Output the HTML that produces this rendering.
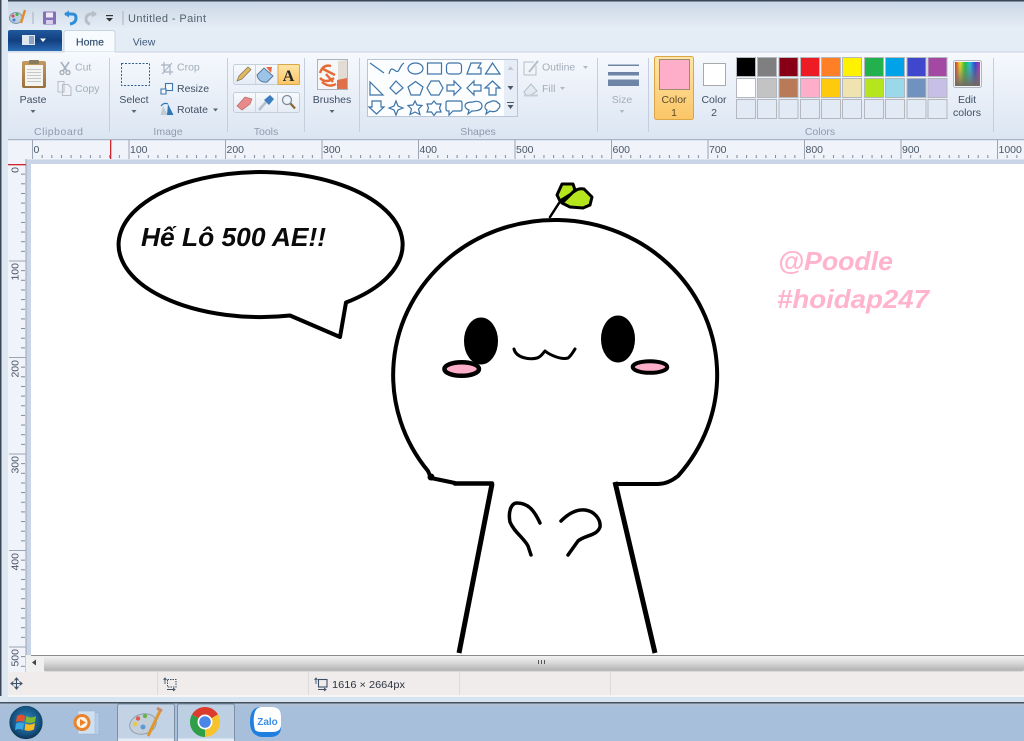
<!DOCTYPE html>
<html><head><meta charset="utf-8"><title>Untitled - Paint</title>
<style>
html,body{margin:0;padding:0;background:#fff;width:1024px;height:741px;overflow:hidden}
svg{display:block;font-family:"Liberation Sans","Noto Sans CJK SC",sans-serif}
.l{font-size:10.5px;fill:#3f4f63}
.d{font-size:10.5px;fill:#a3adb9}
.g{font-size:10.5px;fill:#8f9cad}
.m{text-anchor:middle}
.r{font-size:10.5px;fill:#4a5666}
.sh path,.sh rect,.sh ellipse,.sh line{fill:none;stroke:#3c74a8;stroke-width:1.2}
</style></head><body>
<svg width="1024" height="741" viewBox="0 0 1024 741" xmlns="http://www.w3.org/2000/svg">
<defs>
<linearGradient id="tb" x1="0" y1="0" x2="0" y2="1"><stop offset="0" stop-color="#c9d6e4"/><stop offset="1" stop-color="#e6eef7"/></linearGradient>
<linearGradient id="rb" x1="0" y1="0" x2="0" y2="1"><stop offset="0" stop-color="#f6f9fd"/><stop offset=".6" stop-color="#e6edf7"/><stop offset="1" stop-color="#dbe5f2"/></linearGradient>
<linearGradient id="app" x1="0" y1="0" x2="0" y2="1"><stop offset="0" stop-color="#1f5a9e"/><stop offset=".5" stop-color="#123f80"/><stop offset="1" stop-color="#2a6cb4"/></linearGradient>
<linearGradient id="or" x1="0" y1="0" x2="0" y2="1"><stop offset="0" stop-color="#fde6a6"/><stop offset="1" stop-color="#fbc566"/></linearGradient>
<linearGradient id="sb" x1="0" y1="0" x2="0" y2="1"><stop offset="0" stop-color="#f2f2f2"/><stop offset=".45" stop-color="#d8d8d8"/><stop offset=".9" stop-color="#b4b4b4"/><stop offset="1" stop-color="#c4c4c4"/></linearGradient>
<linearGradient id="rain" x1="0" y1="0" x2="1" y2="0"><stop offset="0" stop-color="#e0232b"/><stop offset=".2" stop-color="#f0e020"/><stop offset=".4" stop-color="#20c040"/><stop offset=".6" stop-color="#20c0e0"/><stop offset=".8" stop-color="#3040d0"/><stop offset="1" stop-color="#c030b0"/></linearGradient>
<linearGradient id="fade" x1="0" y1="0" x2="0" y2="1"><stop offset="0" stop-color="#808080" stop-opacity="0"/><stop offset="1" stop-color="#706a60"/></linearGradient>
<linearGradient id="btn" x1="0" y1="0" x2="0" y2="1"><stop offset="0" stop-color="#f8fafd"/><stop offset="1" stop-color="#e4ebf5"/></linearGradient>
<radialGradient id="orb" cx=".5" cy=".45" r=".55"><stop offset="0" stop-color="#2f8ec4"/><stop offset=".75" stop-color="#15507f"/><stop offset="1" stop-color="#0c2f4f"/></radialGradient>
<linearGradient id="clip" x1="0" y1="0" x2="0" y2="1"><stop offset="0" stop-color="#c39a62"/><stop offset="1" stop-color="#9a6f3e"/></linearGradient>
<pattern id="tx" x="32" y="155" width="9.65" height="4" patternUnits="userSpaceOnUse"><rect width="1" height="3" fill="#7e8a9a"/></pattern>
<pattern id="ty" x="21" y="164" width="5" height="9.65" patternUnits="userSpaceOnUse"><rect width="4" height="1" fill="#7e8a9a"/></pattern>
<pattern id="mx" x="32" y="140" width="96.5" height="20" patternUnits="userSpaceOnUse"><rect width="1" height="20" fill="#9aa6b6"/></pattern>
</defs>

<g style="filter:blur(.35px)">
<!-- frame -->
<rect width="1024" height="30" fill="url(#tb)"/>
<rect width="1024" height="1.5" fill="#3a4656"/>
<rect y="30" width="1024" height="22" fill="#e4ecf6"/>
<rect y="0" width="8" height="703" fill="#dde7f2"/>
<rect y="0" width="1.5" height="703" fill="#3a4656"/>

<!-- QAT -->
<ellipse cx="16" cy="18" rx="6.5" ry="5.5" fill="#b8cfe0" stroke="#7f98ae"/>
<circle cx="13" cy="16" r="1.5" fill="#e04848"/><circle cx="17" cy="14.5" r="1.5" fill="#48b048"/><circle cx="14" cy="20" r="1.5" fill="#4878d0"/>
<path d="M25 10 L21 23" stroke="#e08a2a" stroke-width="2.4"/>
<rect x="32.5" y="12" width="1" height="12" fill="#a5b1c0"/>
<rect x="43" y="11.5" width="13" height="13" rx="1" fill="#8470b8"/><rect x="46" y="12.5" width="7" height="5" fill="#efeaf6"/><rect x="46" y="20" width="7" height="4" fill="#d7d0e8"/>
<path d="M65 14 H72 Q76 14 76 18 Q76 23 70 24" fill="none" stroke="#2f8ed8" stroke-width="3"/><path d="M64 14 L69 10.5 V17.5 Z" fill="#2f8ed8"/>
<path d="M96 14 H90 Q86 15 86 19 Q86 23 90 24" fill="none" stroke="#b6bfc8" stroke-width="3"/><path d="M97 14 L92 10.5 V17.5 Z" fill="#b6bfc8"/>
<rect x="106" y="15" width="7" height="1.2" fill="#333"/><path d="M106 18 H113 L109.5 21.5 Z" fill="#333"/>
<rect x="122.5" y="11" width="1" height="14" fill="#a5b1c0"/>
<text x="128" y="22" font-size="11" fill="#55606e" textLength="78" lengthAdjust="spacing">Untitled - Paint</text>

<!-- tabs -->
<path d="M8 51 V32 Q8 30 10 30 H60 Q62 30 62 32 V51 Z" fill="url(#app)"/>
<rect x="22" y="35" width="13" height="10" fill="#dfe8f2"/><rect x="29" y="36" width="5" height="8" fill="#8ba4c2"/>
<path d="M40 38.5 H46 L43 42 Z" fill="#fff"/>
<path d="M64 52 V33 Q64 30.500 67 30.500 H112 Q115 30.500 115 33 V52 Z" fill="#f8fbfe" stroke="#c8d4e2"/>
<text x="90" y="45.500" font-size="10.500" fill="#33506f" text-anchor="middle" stroke="#33506f" stroke-width=".2">Home</text>
<text x="144" y="45.500" font-size="10.500" fill="#3e5a7a" text-anchor="middle">View</text>

<!-- ribbon -->
<rect x="8" y="52" width="1016" height="87" fill="url(#rb)"/>
<rect x="8" y="51.500" width="56" height="1" fill="#c8d4e2"/><rect x="115" y="51.500" width="909" height="1" fill="#c8d4e2"/>
<rect x="8" y="139" width="1016" height="1.500" fill="#a9b5c4"/>
<g fill="#c3cfdd">
<rect x="109" y="58" width="1" height="74"/><rect x="227" y="58" width="1" height="74"/><rect x="304" y="58" width="1" height="74"/><rect x="359" y="58" width="1" height="74"/><rect x="597" y="58" width="1" height="74"/><rect x="648" y="58" width="1" height="74"/><rect x="993" y="58" width="1" height="74"/>
</g>

<!-- clipboard -->
<rect x="22" y="61" width="24" height="27" rx="2" fill="url(#clip)"/>
<rect x="25" y="65" width="18" height="21" fill="#f4f4f0"/>
<g fill="#c4c8cc"><rect x="27" y="69" width="14" height="1"/><rect x="27" y="72" width="14" height="1"/><rect x="27" y="75" width="14" height="1"/><rect x="27" y="78" width="14" height="1"/><rect x="27" y="81" width="14" height="1"/></g>
<rect x="29" y="60" width="10" height="4" rx="1" fill="#8a7a5c"/>
<text x="33" y="103" class="l m">Paste</text><path d="M30.500 110 H35.500 L33 113 Z" fill="#556477"/>
<path d="M61 62 L67 71 M69 62 L63 71" stroke="#a6b0bc" stroke-width="1.600" fill="none"/><circle cx="62" cy="72.500" r="2" fill="none" stroke="#a6b0bc" stroke-width="1.400"/><circle cx="68" cy="72.500" r="2" fill="none" stroke="#a6b0bc" stroke-width="1.400"/>
<text x="75" y="70.500" class="d">Cut</text>
<path d="M58 81.500 H64 V92 H58 Z M62.500 84.500 H68 L71 87.500 V95.500 H62.500 Z" fill="#eef2f7" stroke="#b5bec9"/>
<text x="75" y="92" class="d">Copy</text>
<text x="34" y="135" class="g" textLength="49" lengthAdjust="spacing">Clipboard</text>

<!-- image -->
<rect x="121.500" y="63.500" width="28" height="22" fill="none" stroke="#2f5f90" stroke-dasharray="2 1.500"/>
<text x="134" y="103" class="l m">Select</text><path d="M131.500 110 H136.500 L134 113 Z" fill="#556477"/>
<path d="M164 62 V72 H173 M161 65 H170 V75" fill="none" stroke="#a9b4c1" stroke-width="1.200"/><path d="M162 74 L172 63" stroke="#a9b4c1"/>
<text x="177" y="70.500" class="d">Crop</text>
<rect x="165.500" y="83.500" width="7" height="7" fill="#f6f9fc" stroke="#3b76ad" stroke-width="1.100"/><path d="M161 94 V89 H166 V94 Z" fill="#f6f9fc" stroke="#3b76ad" stroke-width="1.100"/>
<text x="177" y="92" class="l">Resize</text>
<path d="M160.500 115 L163 106 L168 115 Z" fill="#c2cad3"/><path d="M168 104 L173.500 115 H167 Z" fill="#2e78b8"/><path d="M161 106 Q164 102 168 104" fill="none" stroke="#2e78b8" stroke-width="1.200"/>
<text x="177" y="113" class="l">Rotate</text><path d="M213 108.500 H218 L215.500 111.500 Z" fill="#556477"/>
<text x="168" y="135" class="g m">Image</text>

<!-- tools -->
<rect x="233.500" y="64.500" width="66" height="20" rx="2" fill="url(#btn)" stroke="#c4cfdc"/>
<rect x="233.500" y="92.500" width="66" height="20" rx="2" fill="url(#btn)" stroke="#c4cfdc"/>
<rect x="278" y="64.500" width="21.500" height="20" rx="1" fill="url(#or)" stroke="#dba548"/>
<rect x="255" y="65" width="1" height="19" fill="#ccd6e2"/><rect x="277" y="93" width="1" height="19" fill="#ccd6e2"/><rect x="255" y="93" width="1" height="19" fill="#ccd6e2"/>
<path d="M237 81 L239 76 L248 67 L251 69.500 L242 79 Z" fill="#e2b860" stroke="#7e7052" stroke-width=".7"/>
<path d="M257 75 L264 68 L273 76 L267 82 Q261 83 258 78 Z" fill="#9cc4e6" stroke="#5a7a9a"/><path d="M266 67 L272 67 L271 73 Z" fill="#e86a44"/>
<text x="288.500" y="81" font-family="Liberation Serif" font-weight="bold" font-size="16" text-anchor="middle" fill="#252525">A</text>
<path d="M237 106 L245 97 L252 99 L250 104 L242 110 Z" fill="#e88a8a" stroke="#b96a6a" stroke-width=".7"/>
<path d="M259 110 L266 102" stroke="#b4c0cc" stroke-width="2.500"/><path d="M264 100 L270 95 L274 99 L269 105 Z" fill="#3c7ec0"/>
<circle cx="287" cy="100" r="4.500" fill="#eef4fa" stroke="#7f8c9c" stroke-width="1.300"/><path d="M290.500 103.500 L295 108.500" stroke="#8b6a3a" stroke-width="2.400"/>
<text x="266" y="135" class="g m">Tools</text>

<!-- brushes -->
<rect x="317.500" y="59.500" width="30" height="30" fill="#f5f7f9" stroke="#aab4c0"/>
<path d="M338 61 L347 60 V80 L338 82 Z" fill="#e2dcd4"/><path d="M337 80 L347 78 V89 H337 Z" fill="#e0704a"/>
<path d="M320 73 Q323 64 331 66 M320 78 Q326 84 334 78 M322 82 Q329 88 336 84 M323 69 L335 75 M326 74 L333 82" fill="none" stroke="#e56a34" stroke-width="2.400"/>
<text x="332" y="103" class="l m">Brushes</text><path d="M329.500 110 H334.500 L332 113 Z" fill="#556477"/>

<!-- shapes -->
<rect x="367.500" y="59.500" width="150" height="57" fill="#fbfdff" stroke="#b7c5d6"/>
<rect x="504" y="60" width="13" height="56" fill="#e6edf6"/>
<path d="M507.500 70 H513.500 L510.500 66 Z" fill="#c0c8d2"/><path d="M507.500 86 H513.500 L510.500 90 Z" fill="#4a5666"/>
<rect x="507" y="102" width="7" height="1" fill="#4a5666"/><path d="M507.500 105 H513.500 L510.500 109 Z" fill="#4a5666"/>
<g class="sh">
<line x1="370" y1="63" x2="384" y2="73"/>
<path d="M389 74 C392 62 396 76 399 70 C401 66 402 64 404 63"/>
<ellipse cx="415.500" cy="68.500" rx="7.500" ry="5.500"/>
<rect x="427.500" y="63" width="14" height="11"/>
<rect x="446.500" y="63" width="15" height="11" rx="3"/>
<path d="M467 74 L471 63 H481 L478 68 H481 V74 Z"/>
<path d="M485.500 74 L492.500 63 L500 74 Z"/>
<path d="M370 82 V95 H383 Z"/>
<path d="M396 81 L403 88 L396 94 L390 88 Z"/>
<path d="M415.500 81.500 L423 87 L420 95 H411 L408 87 Z"/>
<path d="M430 81 H438 L442 88 L438 95 H430 L426 88 Z" transform="translate(1 0) scale(1)"/>
<path d="M447 85 H454 V81 L461 88 L454 95 V91 H447 Z"/>
<path d="M467 88 L474 81 V85 H481 V91 H474 V95 Z"/>
<path d="M492.500 81 L500 88 H496 V95 H489 V88 H485 Z"/>
<path d="M372 101 H381 V107 H384 L376.500 114 L369 107 H372 Z"/>
<path d="M396 101 L398 106 L403 108 L398 110 L396 115 L394 110 L389 108 L394 106 Z"/>
<path d="M415 101 L417 105 L422 105.500 L418.500 109 L420 114.500 L415 112 L410 114.500 L411.500 109 L408 105.500 L413 105 Z"/>
<path d="M434 101 L436.500 104 L441 104 L439.500 108 L441 112 L436.500 112 L434 115.500 L431.500 112 L427 112 L428.500 108 L427 104 L431.500 104 Z"/>
<path d="M448 101 H460 Q462 101 462 103 V109 Q462 111 460 111 H453 L449 115 V111 H448 Q446 111 446 109 V103 Q446 101 448 101 Z"/>
<path d="M473 102 C479 100 482 103 482 106 C482 110 478 111 472 111 L468 114 L469 110 C466 109 465 107 465 106 C465 103 469 102 473 102 Z"/>
<path d="M490 102 C493 100 497 101 498 103 C501 104 500 108 498 109 C497 112 492 112 490 111 L486 114 L487 110 C484 109 484 103 490 102 Z"/>
</g>
<path d="M524 75 V62 H534 M524 75 H536 V66" fill="none" stroke="#b4bec9"/><path d="M529 72 L538 61" stroke="#b4bec9" stroke-width="2"/>
<text x="542" y="70.500" class="d">Outline</text><path d="M583 66 H588 L585.500 69 Z" fill="#b0b9c4"/>
<path d="M524 92 L531 84 L537 91 L531 95 H526 Z" fill="#e4eaf2" stroke="#b4bec9"/><rect x="524" y="94.500" width="14" height="2" fill="#c4cdd8"/>
<text x="542" y="92" class="d">Fill</text><path d="M560 87 H565 L562.500 90 Z" fill="#b0b9c4"/>
<text x="478" y="135" class="g m">Shapes</text>

<!-- size -->
<rect x="608" y="64.500" width="31" height="1.500" fill="#6e85a8"/>
<rect x="608" y="72" width="31" height="3.500" fill="#6e85a8"/>
<rect x="608" y="79.500" width="31" height="6.500" fill="#6e85a8"/>
<text x="622" y="103" class="d m">Size</text><path d="M619.500 110 H624.500 L622 113 Z" fill="#b0b9c4"/>

<!-- color 1 / 2 -->
<rect x="654.500" y="56.500" width="39" height="63" rx="2" fill="url(#or)" stroke="#dba548"/>
<rect x="659.500" y="59.500" width="30" height="30" fill="#ffaec9" stroke="#a08a70"/>
<text x="674" y="103" class="m" font-size="10.500" fill="#5a4a2c">Color</text><text x="674" y="116" class="m" font-size="10.500" fill="#5a4a2c">1</text>
<rect x="703.500" y="63.500" width="22" height="22" fill="#fff" stroke="#a9a9a9"/>
<text x="714" y="103" class="l m">Color</text><text x="714" y="116" class="l m">2</text>

<!-- palette -->
<g stroke="#b4b8be" stroke-width="1">
<rect x="736.500" y="57.500" width="19" height="19" fill="#000"/><rect x="757.500" y="57.500" width="19" height="19" fill="#7f7f7f"/><rect x="779" y="57.500" width="19" height="19" fill="#880015"/><rect x="800.500" y="57.500" width="19" height="19" fill="#ed1c24"/><rect x="821.500" y="57.500" width="19" height="19" fill="#ff7f27"/><rect x="842.500" y="57.500" width="19" height="19" fill="#fff200"/><rect x="864.500" y="57.500" width="19" height="19" fill="#22b14c"/><rect x="885.500" y="57.500" width="19" height="19" fill="#00a2e8"/><rect x="907" y="57.500" width="19" height="19" fill="#3f48cc"/><rect x="928" y="57.500" width="19" height="19" fill="#a349a4"/>
<rect x="736.500" y="78.500" width="19" height="19" fill="#fff"/><rect x="757.500" y="78.500" width="19" height="19" fill="#c3c3c3"/><rect x="779" y="78.500" width="19" height="19" fill="#b97a57"/><rect x="800.500" y="78.500" width="19" height="19" fill="#ffaec9"/><rect x="821.500" y="78.500" width="19" height="19" fill="#ffc90e"/><rect x="842.500" y="78.500" width="19" height="19" fill="#efe4b0"/><rect x="864.500" y="78.500" width="19" height="19" fill="#b5e61d"/><rect x="885.500" y="78.500" width="19" height="19" fill="#99d9ea"/><rect x="907" y="78.500" width="19" height="19" fill="#7092be"/><rect x="928" y="78.500" width="19" height="19" fill="#c8bfe7"/>
<g fill="#e2eaf5">
<rect x="736.500" y="99.500" width="19" height="19"/><rect x="757.500" y="99.500" width="19" height="19"/><rect x="779" y="99.500" width="19" height="19"/><rect x="800.500" y="99.500" width="19" height="19"/><rect x="821.500" y="99.500" width="19" height="19"/><rect x="842.500" y="99.500" width="19" height="19"/><rect x="864.500" y="99.500" width="19" height="19"/><rect x="885.500" y="99.500" width="19" height="19"/><rect x="907" y="99.500" width="19" height="19"/><rect x="928" y="99.500" width="19" height="19"/>
</g></g>
<rect x="953.500" y="60.500" width="28" height="27" rx="2" fill="#f3f5f8" stroke="#aeb6c0"/>
<rect x="955" y="62" width="25" height="24" fill="url(#rain)"/><rect x="955" y="62" width="25" height="24" fill="url(#fade)"/>
<text x="967" y="103" class="l m">Edit</text><text x="967" y="116" class="l m">colors</text>
<text x="820" y="135" class="g m">Colors</text>

<!-- canvas backdrop -->
<rect x="8" y="140" width="1016" height="532" fill="#c9d4e6"/>
<!-- h ruler -->
<rect x="8" y="140.500" width="1016" height="19" fill="#f0f3fa"/>
<rect x="32" y="155" width="992" height="3.500" fill="url(#tx)"/>
<rect x="32" y="140" width="992" height="19" fill="url(#mx)"/>
<g class="r">
<text x="33.500" y="153">0</text><text x="130" y="153">100</text><text x="226.500" y="153">200</text><text x="323" y="153">300</text><text x="419.500" y="153">400</text><text x="516" y="153">500</text><text x="612.500" y="153">600</text><text x="709" y="153">700</text><text x="805.500" y="153">800</text><text x="902" y="153">900</text><text x="998.500" y="153">1000</text>
</g>
<rect x="110" y="140" width="1.300" height="19" fill="#d0242c"/>
<!-- v ruler -->
<rect x="8" y="159" width="18" height="513" fill="#f0f3fa"/>
<rect x="25.500" y="159" width="1" height="513" fill="#9aa6b6"/>
<rect x="21" y="164" width="4.500" height="508" fill="url(#ty)"/>
<g fill="#9aa6b6"><rect x="9" y="260.500" width="17" height="1"/><rect x="9" y="357" width="17" height="1"/><rect x="9" y="453.500" width="17" height="1"/><rect x="9" y="550" width="17" height="1"/><rect x="9" y="646.500" width="17" height="1"/></g>
<rect x="8" y="164" width="18" height="1.300" fill="#d0242c"/>
<g class="r" text-anchor="end">
<text transform="translate(18.500 167) rotate(-90)">0</text>
<text transform="translate(18.500 263) rotate(-90)">100</text>
<text transform="translate(18.500 360) rotate(-90)">200</text>
<text transform="translate(18.500 456) rotate(-90)">300</text>
<text transform="translate(18.500 553) rotate(-90)">400</text>
<text transform="translate(18.500 649) rotate(-90)">500</text>
</g>
</g>

<!-- canvas -->
<rect x="31" y="164" width="993" height="491" fill="#fff"/>
<g fill="none" stroke="#000" stroke-linejoin="round" stroke-linecap="round">
<path d="M346 302.500 A142 72.500 0 1 0 290 315.500 L340 337 Z" stroke-width="4"/>
<path d="M455 483 L431 478 L428 471 A162 155 0 1 1 678 476 Q668 484 658 484 H615" stroke-width="4"/>
<path d="M455 483.500 H492" stroke-width="4.500"/>
<path d="M492 484 L459 653" stroke-width="5" stroke-linecap="butt"/>
<path d="M615 482 L655 653" stroke-width="5" stroke-linecap="butt"/>
<circle cx="431" cy="477" r="3.500" fill="#000" stroke="none"/>
<path d="M540 523 C534 510 528 503 517 503 C511 503 508 512 510 522 C514 532 524 538 528 546 L531 555" stroke-width="3.500"/>
<path d="M561 521 C567 515 575 509 585 510 C594 511 601 519 600 527 C597 536 585 535 578 541 L568 555" stroke-width="3.500"/>
<path d="M514 349 C516 358 530 360 537 358 C541 357 543 353 545 351 C550 355 561 360 568 358 C571 356 573 352 575 349" stroke-width="3"/>
<ellipse cx="481" cy="341" rx="16.500" ry="23" fill="#000"/>
<ellipse cx="618" cy="339" rx="16.500" ry="23" fill="#000"/>
<ellipse cx="461.700" cy="369" rx="17.300" ry="6.800" fill="#ffaec9" stroke-width="4.500"/>
<ellipse cx="650" cy="367" rx="17.300" ry="5.800" fill="#ffaec9" stroke-width="4"/>
<path d="M574 191 Q579 188 584 189 L592 197 L590 205 L583 208 L570 207 L562 203 Z" fill="#b5e61d" stroke-width="3"/>
<path d="M575 190 L573 184 L562 184 L557 195 L560 201 L566 199 Z" fill="#b5e61d" stroke-width="3"/>
<path d="M550 217 L561 200 L577 190" stroke-width="2.500"/>
</g>
<text x="141" y="246" font-size="26" font-weight="bold" font-style="italic" fill="#0a0a0a" textLength="185" lengthAdjust="spacingAndGlyphs">Hế Lô 500 AE!!</text>
<text x="778" y="270" font-size="26" font-weight="bold" font-style="italic" fill="#ffb3cc" textLength="115" lengthAdjust="spacingAndGlyphs">@Poodle</text>
<text x="777" y="308" font-size="26" font-weight="bold" font-style="italic" fill="#ffb3cc" textLength="152" lengthAdjust="spacingAndGlyphs">#hoidap247</text>

<g style="filter:blur(.35px)">
<!-- scrollbar -->
<rect x="26" y="655" width="998" height="17" fill="#f0f0f0"/>
<rect x="31" y="655" width="993" height="1" fill="#8a8a8a"/>
<path d="M32 662.500 L36 659.500 V665.500 Z" fill="#444"/>
<rect x="44" y="656" width="980" height="15.500" rx="2" fill="url(#sb)"/>
<g fill="#555"><rect x="538" y="660" width="1" height="4"/><rect x="541" y="660" width="1" height="4"/><rect x="544" y="660" width="1" height="4"/></g>

<!-- status -->
<rect x="8" y="672" width="1016" height="24" fill="#f0eceb"/>
<rect x="8" y="695" width="1016" height="2" fill="#f6f5f5"/>
<rect x="0" y="697" width="1024" height="5.500" fill="#d6e3f0"/>
<rect x="0" y="696" width="8" height="7" fill="#dde7f2"/>
<g fill="#dedada"><rect x="157" y="672" width="1" height="23"/><rect x="308" y="672" width="1" height="23"/><rect x="459" y="672" width="1" height="23"/><rect x="610" y="672" width="1" height="23"/></g>
<path d="M11.500 683.500 H21.500 M16.500 678.500 V688.500 M14.500 680.500 L16.500 678 L18.500 680.500 M14.500 686.500 L16.500 689 L18.500 686.500 M13.500 681.500 L11 683.500 L13.500 685.500 M19.500 681.500 L22 683.500 L19.500 685.500" fill="none" stroke="#3c5068" stroke-width="1.100"/>
<rect x="167.500" y="679.500" width="8.500" height="7.500" fill="none" stroke="#3c5068" stroke-dasharray="1.500 1"/>
<path d="M165 684 V678 M163.500 680 L165 678 L166.500 680 M167 689.500 H175 M173 688 L175 689.500 L173 691" fill="none" stroke="#3c5068" stroke-width=".9"/>
<rect x="318.500" y="679.500" width="8.500" height="7.500" fill="none" stroke="#3c5068" stroke-width="1.100"/>
<path d="M316 684 V678 M314.500 680 L316 678 L317.500 680 M318 689.500 H326 M324 688 L326 689.500 L324 691" fill="none" stroke="#3c5068" stroke-width=".9"/>
<text x="332" y="688" font-size="10.500" fill="#2a3340" textLength="73" lengthAdjust="spacingAndGlyphs">1616 × 2664px</text>

<!-- taskbar -->
<rect y="702" width="1024" height="1.600" fill="#46525f"/>
<rect y="703.500" width="1024" height="38" fill="#a7bfdb"/>
<rect y="703.500" width="1024" height="3" fill="#aebfd6"/>
<circle cx="26" cy="722.500" r="17" fill="url(#orb)" stroke="#a9c0d4" stroke-width=".8"/>
<path d="M17 716 Q21 713 25 716 L24 722 Q20 720 16 722 Z" fill="#e6502a"/>
<path d="M26.500 716 Q31 719 36 716 L35 722 Q30 724 25.500 722 Z" fill="#7fbb30"/>
<path d="M16 723.500 Q20 721.500 24 723.500 L23 730 Q19 728 15 730 Z" fill="#3ba6e4"/>
<path d="M25.500 723.500 Q30 726 35 723 L34 729.500 Q29 732 24.500 730 Z" fill="#f8bb22"/>
<rect x="84" y="712.500" width="15" height="22" fill="#b4cde8" stroke="#9cb4cc" stroke-width=".6"/>
<rect x="78" y="711" width="17" height="23" fill="#cfe0f0" stroke="#a4bad2" stroke-width=".6"/>
<circle cx="82" cy="722.500" r="8.500" fill="#e9822a"/><circle cx="82" cy="722.500" r="5.500" fill="#fbf3e6"/><path d="M80 719 L86 722.500 L80 726 Z" fill="#e9822a"/>

<rect x="117.500" y="704" width="57" height="38" rx="2" fill="#c3d3e5" stroke="#7d90a6"/>
<rect x="118" y="738.500" width="56" height="2.500" fill="#e4edf6"/>
<rect x="177.500" y="704" width="57" height="38" rx="2" fill="#bdcfe3" stroke="#7d90a6"/>
<rect x="178" y="738.500" width="56" height="2.500" fill="#e4edf6"/>
<ellipse cx="143" cy="724" rx="13.500" ry="10" fill="#c2cfd8" stroke="#8fa2b0" transform="rotate(-15 143 724)"/>
<circle cx="138" cy="718.500" r="2.200" fill="#e05a50"/><circle cx="145" cy="716" r="2.200" fill="#6db050"/><circle cx="135" cy="724" r="2.200" fill="#e8c840"/><circle cx="143" cy="727" r="2.500" fill="#5f98d8"/>
<path d="M160 711 L148 736" stroke="#e0962e" stroke-width="3"/><path d="M157 708 L162 711" stroke="#c98b6a" stroke-width="3"/>

<path d="M205 722 L192 714.500 A15 15 0 0 1 218 714.500 Z" fill="#dd3a2e"/>
<path d="M205 722 L192 714.500 A15 15 0 0 0 205 737 Z" fill="#2f9e48"/>
<path d="M205 722 L218 714.500 A15 15 0 0 1 205 737 Z" fill="#f6c32c"/>
<circle cx="205" cy="722" r="7.500" fill="#fff"/><circle cx="205" cy="722" r="5.800" fill="#4a86e8"/>

<path d="M261 707 H272 Q281 707 281 716 V727 Q281 737 270 737 H261 Q250 735 250 722 Q250 707 261 707 Z" fill="#1f7fe0"/>
<path d="M262 707 H272 Q281 707 281 716 V725 Q281 732 272 732 H262 Q257 732 255 730 Q253 723 254 716 Q255 707 262 707 Z" fill="#fff"/>
<text x="267.500" y="725" text-anchor="middle" font-size="10" font-weight="bold" fill="#3a8fe4">Zalo</text>
</g>
</svg>
</body></html>
